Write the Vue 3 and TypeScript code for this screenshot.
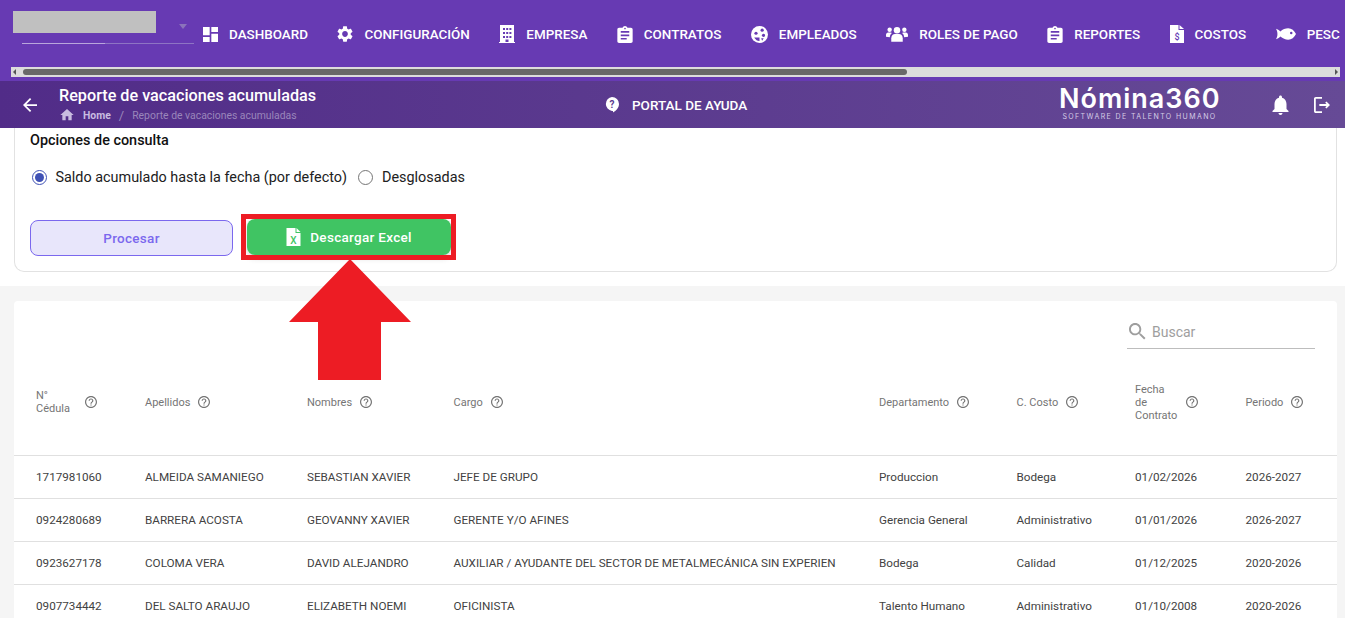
<script setup lang="ts">
const navItems = [
  { label: 'DASHBOARD', icon: 'dashboard' },
  { label: 'CONFIGURACIÓN', icon: 'gear' },
  { label: 'EMPRESA', icon: 'building' },
  { label: 'CONTRATOS', icon: 'clipboard' },
  { label: 'EMPLEADOS', icon: 'face' },
  { label: 'ROLES DE PAGO', icon: 'users' },
  { label: 'REPORTES', icon: 'clipboard' },
  { label: 'COSTOS', icon: 'cost' },
  { label: 'PESCA', icon: 'fish' },
];

const columns = [
  { label: 'N°\nCédula', width: 109, labelWidth: 41 },
  { label: 'Apellidos', width: 162 },
  { label: 'Nombres', width: 146.5 },
  { label: 'Cargo', width: 425.5 },
  { label: 'Departamento', width: 137.5 },
  { label: 'C. Costo', width: 118.5 },
  { label: 'Fecha\nde\nContrato', width: 110.5, labelWidth: 43 },
  { label: 'Periodo', width: 113.5 },
];

const rows = [
  ['1717981060', 'ALMEIDA SAMANIEGO', 'SEBASTIAN XAVIER', 'JEFE DE GRUPO', 'Produccion', 'Bodega', '01/02/2026', '2026-2027'],
  ['0924280689', 'BARRERA ACOSTA', 'GEOVANNY XAVIER', 'GERENTE Y/O AFINES', 'Gerencia General', 'Administrativo', '01/01/2026', '2026-2027'],
  ['0923627178', 'COLOMA VERA', 'DAVID ALEJANDRO', 'AUXILIAR / AYUDANTE DEL SECTOR DE METALMECÁNICA SIN EXPERIEN', 'Bodega', 'Calidad', '01/12/2025', '2020-2026'],
  ['0907734442', 'DEL SALTO ARAUJO', 'ELIZABETH NOEMI', 'OFICINISTA', 'Talento Humano', 'Administrativo', '01/10/2008', '2020-2026'],
];
</script>

<template>
  <div class="page">
    <header class="topbar">
      <div class="nav-row">
        <div class="company">
          <div class="company-name"></div>
          <span class="company-caret"></span>
          <div class="company-line"></div>
        </div>
        <nav class="nav">
          <a v-for="item in navItems" :key="item.label" class="nav-item">
            <svg v-if="item.icon === 'dashboard'" class="nav-icon" viewBox="3 3 18 18" width="15" height="15">
              <path d="M3 13h8V3H3v10zm0 8h8v-6H3v6zm10 0h8V11h-8v10zm0-18v6h8V3h-8z" />
            </svg>
            <svg v-else-if="item.icon === 'gear'" class="nav-icon gear" viewBox="2 2 20 20" width="16" height="16">
              <path d="M19.14 12.94c.04-.3.06-.61.06-.94 0-.32-.02-.64-.07-.94l2.03-1.58c.18-.14.23-.41.12-.61l-1.92-3.32c-.12-.22-.37-.29-.59-.22l-2.39.96c-.5-.38-1.03-.7-1.62-.94l-.36-2.54c-.04-.24-.24-.41-.48-.41h-3.84c-.24 0-.43.17-.47.41l-.36 2.54c-.59.24-1.13.57-1.62.94l-2.39-.96c-.22-.08-.47 0-.59.22L2.74 8.87c-.12.21-.08.47.12.61l2.03 1.58c-.05.3-.09.63-.09.94s.02.64.07.94l-2.03 1.58c-.18.14-.23.41-.12.61l1.92 3.32c.12.22.37.29.59.22l2.39-.96c.5.38 1.03.7 1.62.94l.36 2.54c.05.24.24.41.48.41h3.84c.24 0 .44-.17.47-.41l.36-2.54c.59-.24 1.13-.56 1.62-.94l2.39.96c.22.08.47 0 .59-.22l1.92-3.32c.12-.22.07-.47-.12-.61l-2.01-1.58zM12 15.6c-1.98 0-3.6-1.62-3.6-3.6s1.62-3.6 3.6-3.6 3.6 1.62 3.6 3.6-1.62 3.6-3.6 3.6z" />
            </svg>
            <svg v-else-if="item.icon === 'building'" class="nav-icon" viewBox="0 0 16 18" width="16" height="18">
              <path fill-rule="evenodd" d="M1 0h14v17h1v1H0v-1h1V0zm3 3v2h2V3H4zm3.2 0v2h2V3h-2zm3.2 0v2h2V3h-2zM4 7v2h2V7H4zm3.2 0v2h2V7h-2zm3.2 0v2h2V7h-2zM4 11v2h2v-2H4zm3.2 0v2h2v-2h-2zm3.2 0v2h2v-2h-2zM6.5 14.500V17h3v-2.500h-3z" />
            </svg>
            <svg v-else-if="item.icon === 'clipboard'" class="nav-icon" viewBox="3 1 18 20" width="16" height="17">
              <path d="M19 3h-4.180C14.400 1.840 13.300 1 12 1c-1.300 0-2.400.84-2.820 2H5c-1.100 0-2 .9-2 2v14c0 1.100.9 2 2 2h14c1.100 0 2-.9 2-2V5c0-1.100-.9-2-2-2zm-7 0c.55 0 1 .45 1 1s-.45 1-1 1-1-.45-1-1 .45-1 1-1zm2 14H7v-2h7v2zm3-4H7v-2h10v2zm0-4H7V7h10v2z" />
            </svg>
            <svg v-else-if="item.icon === 'face'" class="nav-icon" viewBox="0 0 16 16" width="17" height="17">
              <circle cx="8" cy="8" r="8" />
              <circle cx="4.700" cy="6.800" r="1.500" class="cut" />
              <circle cx="10.500" cy="3.900" r="1.500" class="cut" />
              <circle cx="11.800" cy="8.800" r="1.500" class="cut" />
              <path d="M3 10.800c1.500 2.400 3.400 3.500 5 3.300v-3.300z" class="cut" />
              <path d="M9.500 11.500h2.500l-1.500 2.400z" class="cut" />
            </svg>
            <svg v-else-if="item.icon === 'users'" class="nav-icon" viewBox="0 0 23 16" width="22" height="16">
              <circle cx="11.500" cy="4" r="3.400" />
              <circle cx="3.800" cy="3.600" r="2.300" />
              <circle cx="19.200" cy="3.600" r="2.300" />
              <path d="M5.500 16v-3.500c0-3 2-4.600 3.800-4.600h4.400c1.800 0 3.800 1.600 3.800 4.600V16z" />
              <path d="M0 11v-2c0-1.600 1-2.600 2.200-2.600h2.600c.6 0 1.100.2 1.500.5-1.500 1-2.200 2.600-2.300 4.600z" />
              <path d="M23 11V9c0-1.600-1-2.600-2.200-2.600h-2.600c-.6 0-1.100.2-1.500.5 1.500 1 2.200 2.600 2.300 4.600z" />
            </svg>
            <svg v-else-if="item.icon === 'cost'" class="nav-icon" viewBox="0 0 14 18" width="14" height="18">
              <path d="M0 0h8.500v5H14v13H0z" />
              <path d="M9.500 0L14 4h-4.500z" />
              <text x="7" y="15" class="cost-sign">$</text>
            </svg>
            <svg v-else class="nav-icon" viewBox="0 0 21 12" width="20" height="12">
              <path fill-rule="evenodd" d="M0 0.500c1.600.4 3.200 1.500 4.600 2.800C7 1.200 9.800 0 12.800 0c3.600 0 6.400 2.400 8.200 6-1.800 3.600-4.600 6-8.200 6-3 0-5.800-1.200-8.200-3.300C3.200 10 1.600 11.100 0 11.500 1 9.800 1.500 8 1.500 6S1 2.200 0 .5zM16 3.600a1.300 1.300 0 1 0 0 2.600 1.300 1.300 0 0 0 0-2.600z" />
            </svg>
            <span>{{ item.label }}</span>
          </a>
        </nav>
      </div>
      <div class="scrollbar">
        <span class="arrow-left"></span>
        <div class="scroll-thumb"></div>
        <span class="arrow-right"></span>
      </div>
    </header>

    <div class="subbar">
      <div class="sub-left">
        <svg class="back" viewBox="4 4 16 16" width="14" height="14">
          <path d="M20 11H7.830l5.590-5.590L12 4l-8 8 8 8 1.410-1.410L7.830 13H20v-2z" />
        </svg>
        <div class="title-block">
          <div class="title">Reporte de vacaciones acumuladas</div>
          <div class="crumbs">
            <svg viewBox="2 3 20 18" width="14" height="12" class="home">
              <path d="M10 20v-6h4v6h5v-8h3L12 3 2 12h3v8z" />
            </svg>
            <span class="crumb-home">Home</span>
            <span class="crumb-sep">/</span>
            <span>Reporte de vacaciones acumuladas</span>
          </div>
        </div>
      </div>
      <div class="portal">
        <svg viewBox="0 0 14 16" width="14" height="16">
          <path fill="#fff" d="M7 0a7 7 0 0 1 7 7c0 3.700-2.800 6.700-6 8.500v-1.600H7A7 7 0 0 1 7 0z" />
          <text x="7" y="11" class="portal-q">?</text>
        </svg>
        <span>PORTAL DE AYUDA</span>
      </div>
      <div class="logo">
        <div class="logo-name">Nómina360</div>
        <div class="logo-tag">SOFTWARE DE TALENTO HUMANO</div>
      </div>
      <div class="sub-actions">
        <svg viewBox="4 2 16 20" width="17" height="20">
          <path fill="#fff" d="M12 22c1.100 0 2-.9 2-2h-4c0 1.100.9 2 2 2zm6-6v-5c0-3.070-1.630-5.640-4.500-6.320V4c0-.83-.67-1.500-1.500-1.500s-1.500.67-1.500 1.500v.68C7.640 5.360 6 7.920 6 11v5l-2 2v1h16v-1l-2-2z" />
        </svg>
        <svg viewBox="3 3 18 18" width="16" height="16">
          <path fill="#fff" d="M17 8l-1.410 1.410L17.170 11H9v2h8.170l-1.580 1.580L17 16l4-4-4-4zM5 5h7V3H5c-1.100 0-2 .9-2 2v14c0 1.100.9 2 2 2h7v-2H5V5z" />
        </svg>
      </div>
    </div>

    <section class="filters">
      <div class="filter-card">
        <h3 class="filter-title">Opciones de consulta</h3>
        <div class="radios">
          <label class="radio">
            <span class="radio-dot checked"></span>
            <span>Saldo acumulado hasta la fecha (por defecto)</span>
          </label>
          <label class="radio">
            <span class="radio-dot"></span>
            <span>Desglosadas</span>
          </label>
        </div>
        <div class="actions">
          <button class="btn-process">Procesar</button>
          <button class="btn-excel">
            <svg viewBox="0 0 14 18" width="15" height="18">
              <path fill="#fff" d="M0 0h9v5h5v13H0z" />
              <path fill="#fff" d="M10 0l4 4h-4z" />
              <text x="7" y="15.500" class="excel-x">X</text>
            </svg>
            <span>Descargar Excel</span>
          </button>
        </div>
      </div>
    </section>

    <main class="content">
      <div class="table-card">
        <div class="toolbar">
          <div class="search">
            <svg viewBox="3 3 18 18" width="17" height="17">
              <path fill="#9e9e9e" d="M15.500 14h-.79l-.28-.27C15.410 12.590 16 11.110 16 9.500 16 5.910 13.090 3 9.500 3S3 5.910 3 9.500 5.910 16 9.500 16c1.610 0 3.090-.59 4.230-1.570l.27.28v.79l5 4.990L20.490 19l-4.990-5zm-6 0C7.010 14 5 11.990 5 9.500S7.010 5 9.500 5 14 7.010 14 9.500 11.990 14 9.500 14z" />
            </svg>
            <span>Buscar</span>
          </div>
        </div>
        <table class="grid">
          <colgroup>
            <col v-for="col in columns" :key="col.label" :style="{ width: col.width + 'px' }" />
          </colgroup>
          <thead>
            <tr>
              <th v-for="col in columns" :key="col.label">
                <div class="th-inner">
                  <span class="th-label" :style="col.labelWidth ? { minWidth: col.labelWidth + 'px' } : undefined">{{ col.label }}</span>
                  <svg viewBox="2 2 20 20" width="12" height="12" class="th-help">
                    <path d="M11 18h2v-2h-2v2zm1-16C6.480 2 2 6.480 2 12s4.480 10 10 10 10-4.480 10-10S17.520 2 12 2zm0 18c-4.410 0-8-3.590-8-8s3.590-8 8-8 8 3.590 8 8-3.590 8-8 8zm0-14c-2.210 0-4 1.790-4 4h2c0-1.100.9-2 2-2s2 .9 2 2c0 2-3 1.750-3 5h2c0-2.250 3-2.500 3-5 0-2.210-1.790-4-4-4z" />
                  </svg>
                </div>
              </th>
            </tr>
          </thead>
          <tbody>
            <tr v-for="row in rows" :key="row[0]">
              <td v-for="(cell, i) in row" :key="i">{{ cell }}</td>
            </tr>
          </tbody>
        </table>
      </div>
    </main>

    <!-- Annotation drawn on top of the screenshot -->
    <div class="mark-box"></div>
    <svg class="mark-arrow" viewBox="0 0 122 121" width="122" height="121">
      <polygon points="61,0 122,63 92,63 92,121 29,121 29,63 0,63" fill="#ed1c24" />
    </svg>
  </div>
</template>

<style>
html,
body {
  margin: 0;
  overflow: hidden;
}
</style>

<style scoped>
.page {
  position: relative;
  height: 618px;
  overflow: hidden;
  background: #f5f5f5;
  font-family: Roboto, 'Liberation Sans', sans-serif;
}

/* top navigation */
.topbar {
  height: 81px;
  box-sizing: border-box;
  background: #673ab3;
}

.nav-row {
  display: flex;
  height: 67px;
  margin-right: 5px;
  overflow: hidden;
}

.company {
  position: relative;
  flex: none;
  width: 203px;
}

.company-name {
  position: absolute;
  left: 13px;
  top: 11px;
  width: 143px;
  height: 22px;
  background: #c0c0c0;
}

.company-caret {
  position: absolute;
  left: 179px;
  top: 24px;
  border-left: 4.500px solid transparent;
  border-right: 4.500px solid transparent;
  border-top: 5px solid #8b73bb;
}

.company-line {
  position: absolute;
  left: 22px;
  top: 43px;
  width: 172px;
  height: 1px;
  background: linear-gradient(to right, #b9a6dc 48%, #8e74c4 48%);
}

.nav {
  display: flex;
  gap: 29.500px;
  align-items: center;
  height: 67px;
  box-sizing: border-box;
  padding-top: 1px;
  white-space: nowrap;
  color: #fff;
  font-size: 13.450px;
  font-weight: 500;
}

.nav-item {
  display: flex;
  align-items: center;
  gap: 11px;
}

.nav-icon {
  flex: none;
  fill: #fff;
}

.nav-icon .cut {
  fill: #673ab3;
}

.cost-sign {
  font-family: Roboto, sans-serif;
  font-size: 9px;
  font-weight: 500;
  fill: #673ab3;
  text-anchor: middle;
}

.scrollbar {
  position: relative;
  height: 10px;
  margin: 0 5px 0 11px;
  background: #dcdcdc;
}

.scroll-thumb {
  position: absolute;
  left: 12px;
  top: 2px;
  width: 884px;
  height: 6px;
  border-radius: 3px;
  background: #686868;
}

.arrow-left,
.arrow-right {
  position: absolute;
  top: 2px;
  border-top: 3px solid transparent;
  border-bottom: 3px solid transparent;
}

.arrow-left {
  left: 2px;
  border-right: 3px solid #555;
}

.arrow-right {
  right: 2px;
  border-left: 3px solid #555;
}

/* page title bar */
.subbar {
  display: flex;
  align-items: center;
  height: 47px;
  color: #fff;
  background: linear-gradient(to right, #512c88, #664a96);
}

.sub-left {
  display: flex;
  align-items: center;
  flex: none;
  width: 605px;
  box-sizing: border-box;
  padding-left: 23px;
}

.back {
  fill: #fff;
  margin-right: 22px;
}

.title-block {
  margin-top: -1px;
}

.title {
  font-size: 16.200px;
  font-weight: 500;
  line-height: 19px;
}

.crumbs {
  display: flex;
  align-items: center;
  height: 14px;
  margin-top: 4px;
  font-size: 10.400px;
  color: #9a86bb;
}

.home {
  fill: #c9bce0;
  margin: 0 9px 2px 1px;
}

.crumb-home {
  color: #c9bce0;
  font-weight: 700;
}

.crumb-sep {
  margin: 0 8px;
  font-size: 13px;
}

.portal {
  display: flex;
  align-items: center;
  gap: 13px;
  flex: none;
  width: 454px;
  font-size: 13.500px;
  font-weight: 500;
}

.portal-q {
  font-family: Roboto, sans-serif;
  font-size: 10px;
  font-weight: 700;
  fill: #5a3a8e;
  text-anchor: middle;
}

.logo {
  flex: none;
  width: 161px;
  margin-top: -3px;
  text-align: center;
}

.logo-name {
  font-family: Inter, sans-serif;
  font-size: 27px;
  font-weight: 600;
  line-height: 28px;
  letter-spacing: 1px;
  white-space: nowrap;
}

.logo-tag {
  font-family: Inter, sans-serif;
  font-size: 7px;
  line-height: 8px;
  letter-spacing: 1.400px;
  color: #d6cde6;
  white-space: nowrap;
}

.sub-actions {
  display: flex;
  align-items: center;
  gap: 25px;
  margin-left: 52px;
}

/* filter block */
.filters {
  height: 158px;
  box-sizing: border-box;
  padding: 0 8px 14px 14px;
  background: #fff;
}

.filter-card {
  height: 144px;
  box-sizing: border-box;
  padding: 5px 15px 0;
  border: 1px solid #e2e2e2;
  border-top: none;
  border-radius: 0 0 10px 10px;
}

.filter-title {
  margin: 0;
  font-size: 14.400px;
  font-weight: 500;
  line-height: 16px;
  color: #111;
}

.radios {
  display: flex;
  gap: 11px;
  align-items: center;
  margin-top: 20px;
  padding-left: 1.500px;
  font-size: 14.400px;
  color: #212121;
}

.radio {
  display: flex;
  align-items: center;
  gap: 9px;
}

.radio-dot {
  position: relative;
  flex: none;
  width: 13px;
  height: 13px;
  border: 1.500px solid #757575;
  border-radius: 50%;
}

.radio-dot.checked {
  border-color: #3f51b5;
}

.radio-dot.checked::after {
  content: '';
  position: absolute;
  inset: 2px;
  border-radius: 50%;
  background: #3f51b5;
}

.actions {
  display: flex;
  gap: 14px;
  margin-top: 34px;
}

.btn-process {
  width: 203px;
  height: 36px;
  border: 1px solid #7b68ee;
  border-radius: 8px;
  background: #e8e6fb;
  color: #7b68ee;
  font-family: inherit;
  font-size: 13.500px;
  font-weight: 500;
  letter-spacing: 0.300px;
}

.btn-excel {
  display: flex;
  align-items: center;
  justify-content: center;
  gap: 9px;
  width: 204px;
  height: 36px;
  margin-top: -1px;
  border: none;
  border-radius: 8px;
  background: #40c463;
  color: #fff;
  font-family: inherit;
  font-size: 13.500px;
  font-weight: 500;
  letter-spacing: 0.300px;
  box-shadow: 0 3px 6px rgba(0, 0, 0, 0.16);
}

.excel-x {
  font-family: Roboto, sans-serif;
  font-size: 10px;
  font-weight: 500;
  fill: #40c463;
  text-anchor: middle;
}

/* table */
.content {
  padding: 15px 8px 0 14px;
}

.table-card {
  border-radius: 4px;
  background: #fff;
}

.toolbar {
  display: flex;
  justify-content: flex-end;
  height: 48px;
  padding-right: 22px;
  box-sizing: border-box;
}

.search {
  display: flex;
  align-items: center;
  gap: 6px;
  box-sizing: border-box;
  width: 188px;
  height: 48px;
  padding: 14px 0 0 2px;
  border-bottom: 1px solid #bdbdbd;
  color: #9e9e9e;
  font-size: 14px;
}

.grid {
  width: 100%;
  table-layout: fixed;
  border-collapse: collapse;
}

th {
  height: 106px;
  padding: 0 0 0 22px;
  border-bottom: 1px solid #e0e0e0;
  font-size: 11px;
  font-weight: 400;
  line-height: 13px;
  color: #757575;
  text-align: left;
}

.th-inner {
  display: flex;
  align-items: center;
  gap: 8px;
}

.th-label {
  white-space: pre-line;
}

.th-help {
  flex: none;
  fill: #757575;
}

td {
  height: 42px;
  padding: 0 0 0 22px;
  border-bottom: 1px solid #e0e0e0;
  font-size: 11.700px;
  color: #424242;
  white-space: nowrap;
  overflow: hidden;
}

/* annotation */
.mark-box {
  position: absolute;
  left: 241px;
  top: 214px;
  width: 215px;
  height: 46px;
  box-sizing: border-box;
  border: 5px solid #ed1c24;
}

.mark-arrow {
  position: absolute;
  left: 289px;
  top: 259px;
}
</style>
